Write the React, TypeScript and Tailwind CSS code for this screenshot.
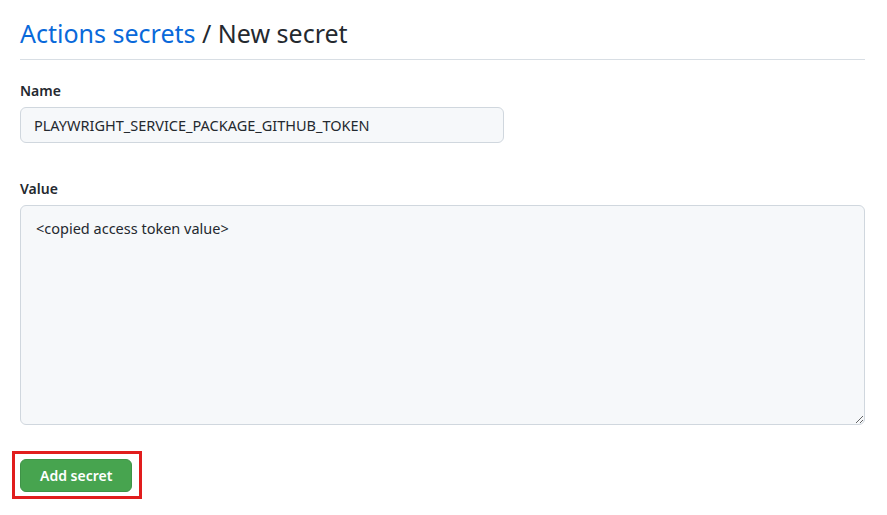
export default function App() {
  return (
    <div
      className="w-[887px] h-[515px] bg-white px-5 text-[#24292f]"
      style={{ fontFamily: '"Noto Sans", "Open Sans", sans-serif' }}
    >
      <div className="w-[845px]">
        <h2 className="pt-[16px] pb-[9px] text-[25px] leading-[34px] font-normal border-b border-[#d8dee4]">
          <a className="text-[#0969da]">Actions secrets</a>
          <span> / New secret</span>
        </h2>

        <div className="mt-[21px]">
          <label className="block text-[14px] font-semibold leading-[20px]">Name</label>
          <input
            readOnly
            value="PLAYWRIGHT_SERVICE_PACKAGE_GITHUB_TOKEN"
            className="mt-[6px] w-[484px] h-[36px] px-[13px] text-[14.5px] bg-[#f6f8fa] border border-[#d0d7de] rounded-[6px] outline-none"
          />
        </div>

        <div className="mt-[36px]">
          <label className="block text-[14px] font-semibold leading-[20px]">Value</label>
          <textarea
            readOnly
            value="<copied access token value>"
            className="mt-[6px] block w-full h-[220px] px-[15px] py-[12px] text-[14.5px] leading-[20px] bg-[#f6f8fa] border border-[#d0d7de] rounded-[6px] outline-none resize-y"
          />
        </div>

        <div className="mt-[26px] -ml-[8px] inline-block border-[3px] border-[#e11d1d] pt-[5px] pb-[4px] pl-[5px] pr-[7px]">
          <button className="block h-[33px] px-[19px] text-[14px] font-semibold text-white bg-[#47a44f] border border-[#3f9348] rounded-[6px]">
            Add secret
          </button>
        </div>
      </div>
    </div>
  );
}
